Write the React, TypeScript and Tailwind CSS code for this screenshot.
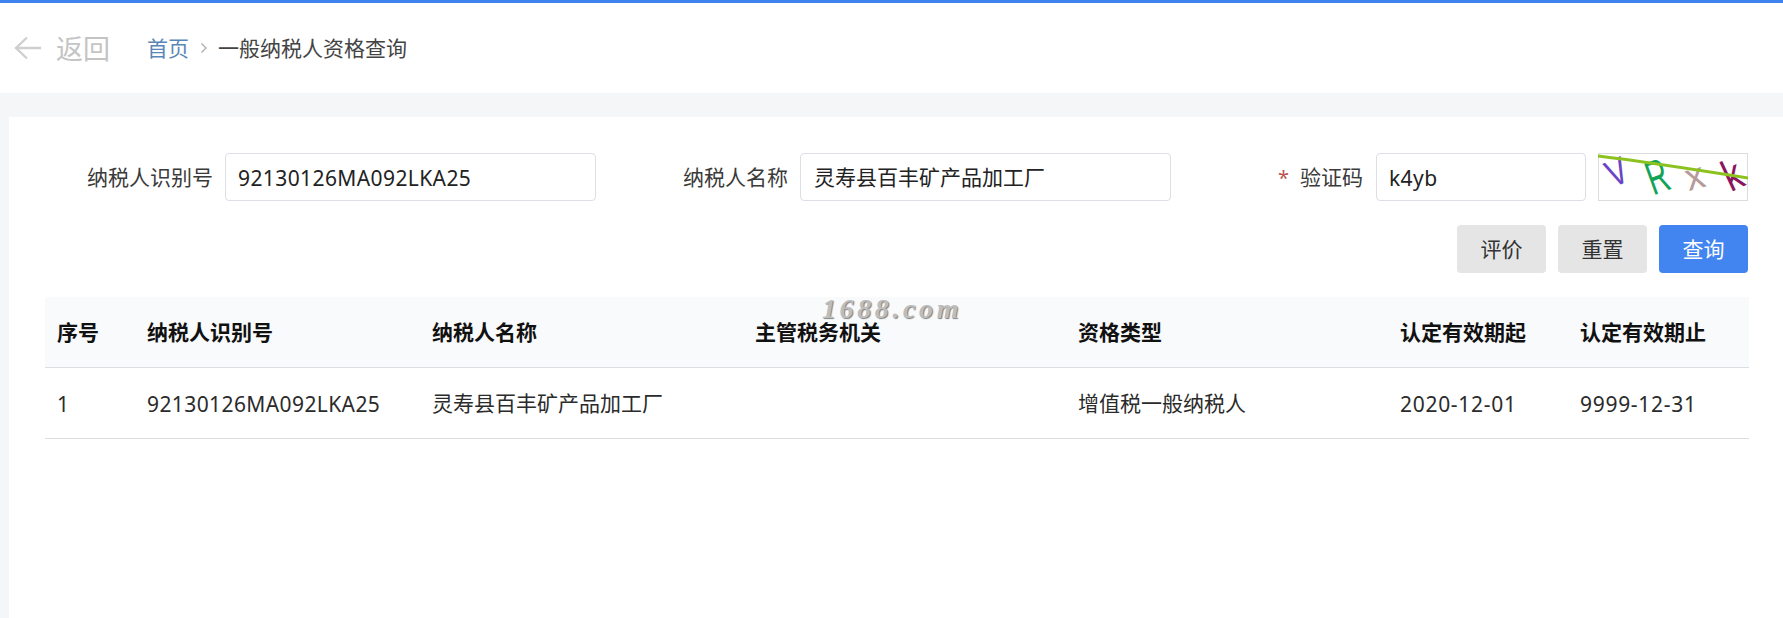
import React from "react";

const font = { fontFamily: '"Noto Sans", "Noto Sans CJK SC", sans-serif' };

function Field({ label, value, required, labelW, latin }: { label: string; value: string; required?: boolean; labelW: string; latin?: boolean }) {
  return (
    <div className="flex items-center">
      <label className={`${labelW} shrink-0 flex justify-end items-center text-[21px] leading-none text-[#3a3a3a] pt-[1px]`}>
        {required && <span className="mr-[11px] text-[20px] text-[#b9534f]">*</span>}
        {label}
      </label>
      <div
        className={`flex-1 h-[48px] flex items-center rounded-[4px] border border-[#dcdfe6] bg-white text-[21px] text-[#222] ${
          latin ? "pl-[12px] pt-[4px] tracking-[0.4px]" : "pl-[13px] pt-[2px]"
        }`}
      >
        {value}
      </div>
    </div>
  );
}

function Captcha() {
  return (
    <svg className="ml-[12px] shrink-0" width="150" height="48" viewBox="0 0 150 48">
      <rect x="0.5" y="0.5" width="149" height="47" fill="#fff" stroke="#dcdcdc" />
      <g fontFamily="Liberation Sans, sans-serif">
        <text fontSize="38" fill="#6a45c4" transform="translate(19 19) rotate(-24) scale(0.8 1) translate(-13 13)">V</text>
        <text fontSize="48" fill="#12a357" transform="translate(59 23) rotate(-20) scale(0.6 1) translate(-17 17)">R</text>
        <text fontSize="38" fill="#b89a9a" transform="translate(97 27) rotate(-15) translate(-9 9)">x</text>
        <text fontSize="44" fill="#8a1460" transform="translate(134 21) rotate(-25) scale(0.8 1) translate(-11 16)">k</text>
      </g>
      <path d="M0 3 C50 9 100 17 150 25" fill="none" stroke="#8cc21f" strokeWidth="3" />
    </svg>
  );
}

const headers = ["序号", "纳税人识别号", "纳税人名称", "主管税务机关", "资格类型", "认定有效期起", "认定有效期止"];
const cells = ["1", "92130126MA092LKA25", "灵寿县百丰矿产品加工厂", "", "增值税一般纳税人", "2020-12-01", "9999-12-31"];
const cellStyle = [
  "pt-[4px] tracking-[0.4px]",
  "pt-[4px] tracking-[0.4px]",
  "pt-[2px]",
  "pt-[2px]",
  "pt-[2px]",
  "pt-[4px] tracking-[0.7px]",
  "pt-[4px] tracking-[0.7px]",
];

export default function App() {
  return (
    <div style={font} className="relative h-[618px] overflow-hidden bg-[#f5f6f7]">
      <div className="h-[3px] bg-[#3f83ee]" />
      <header className="h-[90px] bg-white flex items-center pl-[14px]">
        <svg width="27" height="24" viewBox="0 0 27 24" fill="none" stroke="#cfcfcf" strokeWidth="2.4">
          <path d="M27 12H2M13 1.500 2 12l11 10.500" />
        </svg>
        <span className="ml-[15px] text-[27px] leading-none text-[#c4c4c4]">返回</span>
        <span className="ml-[37px] text-[21px] leading-none text-[#5a87b8]">首页</span>
        <svg className="ml-[11px]" width="8" height="12" viewBox="0 0 8 12" fill="none" stroke="#aaa" strokeWidth="1.2">
          <path d="M1.500 1.500 6 6l-4.500 4.500" />
        </svg>
        <span className="ml-[10px] text-[21px] leading-none text-[#444]">一般纳税人资格查询</span>
      </header>
      <main className="mt-[24px] ml-[9px] h-[501px] bg-white pt-[36px] pl-[36px] pr-[35px]">
        <div className="grid grid-cols-[551px_550px_552px] gap-x-[25px]">
          <Field label="纳税人识别号" value="92130126MA092LKA25" labelW="w-[180px] pr-[12px]" latin />
          <Field label="纳税人名称" value="灵寿县百丰矿产品加工厂" labelW="w-[179px] pr-[12px]" />
          <div className="flex items-center">
            <div className="flex-1">
              <Field label="验证码" value="k4yb" required labelW="w-[180px] pr-[13px]" latin />
            </div>
            <Captcha />
          </div>
        </div>
        <div className="mt-[24px] flex justify-end gap-[12px]">
          <button className="w-[89px] h-[48px] pt-[1px] rounded-[4px] bg-[#e5e5e5] text-[21px] text-[#333]">评价</button>
          <button className="w-[89px] h-[48px] pt-[1px] rounded-[4px] bg-[#e5e5e5] text-[21px] text-[#333]">重置</button>
          <button className="w-[89px] h-[48px] pt-[1px] rounded-[4px] bg-[#4285f0] text-[21px] text-white">查询</button>
        </div>
        <table className="mt-[24px] w-[1704px] table-fixed border-collapse text-left">
          <colgroup>
            <col className="w-[90px]" />
            <col className="w-[285px]" />
            <col className="w-[323px]" />
            <col className="w-[323px]" />
            <col className="w-[322px]" />
            <col className="w-[180px]" />
            <col className="w-[181px]" />
          </colgroup>
          <thead>
            <tr className="h-[70px] bg-[#f9fafb] border-b border-[#dcdfe2]">
              {headers.map((h) => (
                <th key={h} className="px-[12px] pt-[2px] text-[21px] font-bold text-[#111]">{h}</th>
              ))}
            </tr>
          </thead>
          <tbody>
            <tr className="h-[71px] border-b border-[#dcdfe2]">
              {cells.map((c, i) => (
                <td key={i} className={`px-[12px] text-[21px] text-[#2b2b2b] whitespace-nowrap ${cellStyle[i]}`}>
                  {c}
                </td>
              ))}
            </tr>
          </tbody>
        </table>
      </main>
      <div
        className="absolute left-[822px] top-[291px] font-bold italic text-[28px] leading-[36px] tracking-[3.6px] text-[#bdbdbd] [text-shadow:1px_1px_1px_#808080]"
        style={{ fontFamily: '"Liberation Serif", serif' }}
      >
        1688.com
      </div>
    </div>
  );
}
